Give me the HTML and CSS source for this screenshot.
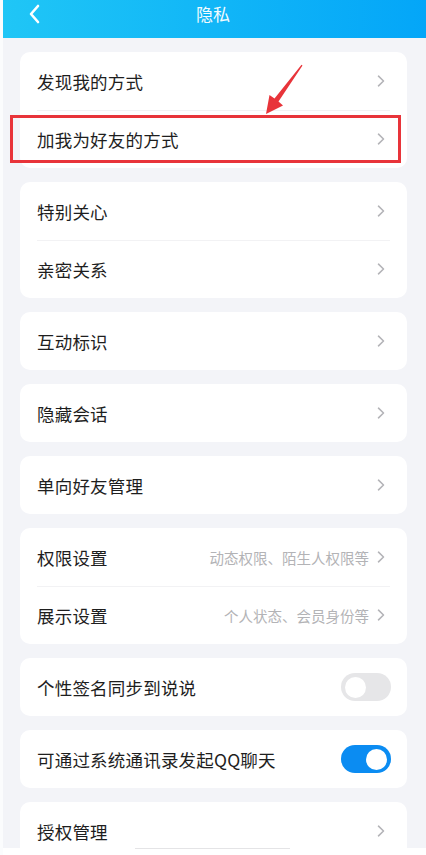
FILE: index.html
```html
<!DOCTYPE html>
<html lang="zh-CN">
  <head>
    <meta charset="UTF-8">
    <meta name="viewport" content="width=device-width, initial-scale=1.0">
    <title>隐私</title>
    <link rel="stylesheet" href="styles.css">
  </head>
  <body>
    <div class="page">
      <div class="header">
        <svg class="back" width="12" height="20" viewBox="0 0 12 20">
          <path d="M10 2L3 10l7 8" fill="none" stroke="#fff" stroke-width="2.6" stroke-linecap="round" stroke-linejoin="round"/>
        </svg>
        <div class="title">隐私</div>
      </div>

      <div class="content">
        <div class="card">
          <div class="row"><span class="label">发现我的方式</span><span class="chev"></span></div>
          <div class="row"><span class="label">加我为好友的方式</span><span class="chev"></span></div>
        </div>

        <div class="card">
          <div class="row"><span class="label">特别关心</span><span class="chev"></span></div>
          <div class="row"><span class="label">亲密关系</span><span class="chev"></span></div>
        </div>

        <div class="card">
          <div class="row"><span class="label">互动标识</span><span class="chev"></span></div>
        </div>

        <div class="card">
          <div class="row"><span class="label">隐藏会话</span><span class="chev"></span></div>
        </div>

        <div class="card">
          <div class="row"><span class="label">单向好友管理</span><span class="chev"></span></div>
        </div>

        <div class="card">
          <div class="row">
            <span class="label">权限设置</span>
            <span class="hint">动态权限、陌生人权限等</span><span class="chev"></span>
          </div>
          <div class="row">
            <span class="label">展示设置</span>
            <span class="hint">个人状态、会员身份等</span><span class="chev"></span>
          </div>
        </div>

        <div class="card">
          <div class="row"><span class="label">个性签名同步到说说</span><span class="switch"></span></div>
        </div>

        <div class="card">
          <div class="row"><span class="label">可通过系统通讯录发起QQ聊天</span><span class="switch on"></span></div>
        </div>

        <div class="card">
          <div class="row"><span class="label">授权管理</span><span class="chev"></span></div>
        </div>
      </div>

      <!-- annotation drawn over the screenshot -->
      <div class="mark-box"></div>
      <svg class="mark-arrow" width="426" height="130" viewBox="0 0 426 130">
        <polygon points="302.5,65.5 278.5,101.5 283,105.5 266,114 269.5,95 274.5,98.5 301.5,64.8" fill="#e8343a"/>
      </svg>

      <div class="home-bar"><span></span></div>
    </div>
  </body>
</html>
```

FILE: styles.css
```css
* {
  box-sizing: border-box;
}

html, body {
  margin: 0;
  height: 100%;
}

body {
  font-family: "Noto Sans CJK SC", "Noto Sans", sans-serif;
  background-color: #f3f4f8;
  color: #1e1e1e;
}

.page {
  position: relative;
  height: 855px;
  overflow: hidden;
  border-left: 3px solid #fbfcfd;
}

.header {
  height: 38px;
  background: linear-gradient(90deg, #20c6f6 0%, #11b6f7 50%, #04a6f8 100%);
  display: flex;
  align-items: flex-start;
  justify-content: center;
  position: relative;
}

.back {
  position: absolute;
  left: 25px;
  top: 4px;
}

.title {
  color: #fff;
  font-size: 17px;
  line-height: 28px;
  margin-left: -3px;
  opacity: 0.95;
}

.content {
  padding: 14px 19px 0 17px;
  display: flex;
  flex-direction: column;
  gap: 14px;
}

.card {
  background-color: #fff;
  border-radius: 10px;
}

.row {
  height: 58px;
  display: flex;
  align-items: center;
  padding: 0 22px 0 17px;
  position: relative;
}

.row + .row::before {
  content: "";
  position: absolute;
  top: 0;
  left: 17px;
  right: 17px;
  height: 1px;
  background-color: #f2f2f4;
}

.label {
  flex: 1;
  font-size: 17.5px;
  letter-spacing: 0.2px;
  white-space: nowrap;
}

.hint {
  font-size: 14.5px;
  color: #b3b3b6;
  margin-right: 8px;
  white-space: nowrap;
}

.chev {
  width: 8px;
  height: 12px;
  background: url("data:image/svg+xml,%3Csvg xmlns='http://www.w3.org/2000/svg' width='8' height='12' viewBox='0 0 8 12'%3E%3Cpath d='M1.5 1.2l5 4.8-5 4.8' fill='none' stroke='%23b4b4b8' stroke-width='1.6' stroke-linecap='round' stroke-linejoin='round'/%3E%3C/svg%3E") no-repeat center;
}

.switch {
  width: 50px;
  height: 28px;
  border-radius: 14px;
  background-color: #e6e6e8;
  position: relative;
  margin-right: -6px;
}

.switch::after {
  content: "";
  position: absolute;
  top: 3.5px;
  left: 4px;
  width: 21px;
  height: 21px;
  border-radius: 50%;
  background-color: #fff;
}

.switch.on {
  background-color: #0b8cf2;
}

.switch.on::after {
  left: auto;
  right: 4px;
}

.mark-box {
  position: absolute;
  left: 7px;
  top: 115px;
  width: 391px;
  height: 48px;
  border: 3px solid #e8343a;
}

.mark-arrow {
  position: absolute;
  left: -3px;
  top: 0;
}

.home-bar {
  position: absolute;
  left: -3px;
  right: 0;
  bottom: 0;
  height: 7px;
  background-color: #fff;
  display: flex;
  justify-content: center;
}

.home-bar span {
  width: 155px;
  height: 1px;
  margin-left: -2px;
  background-color: #e4e4e6;
}
```
